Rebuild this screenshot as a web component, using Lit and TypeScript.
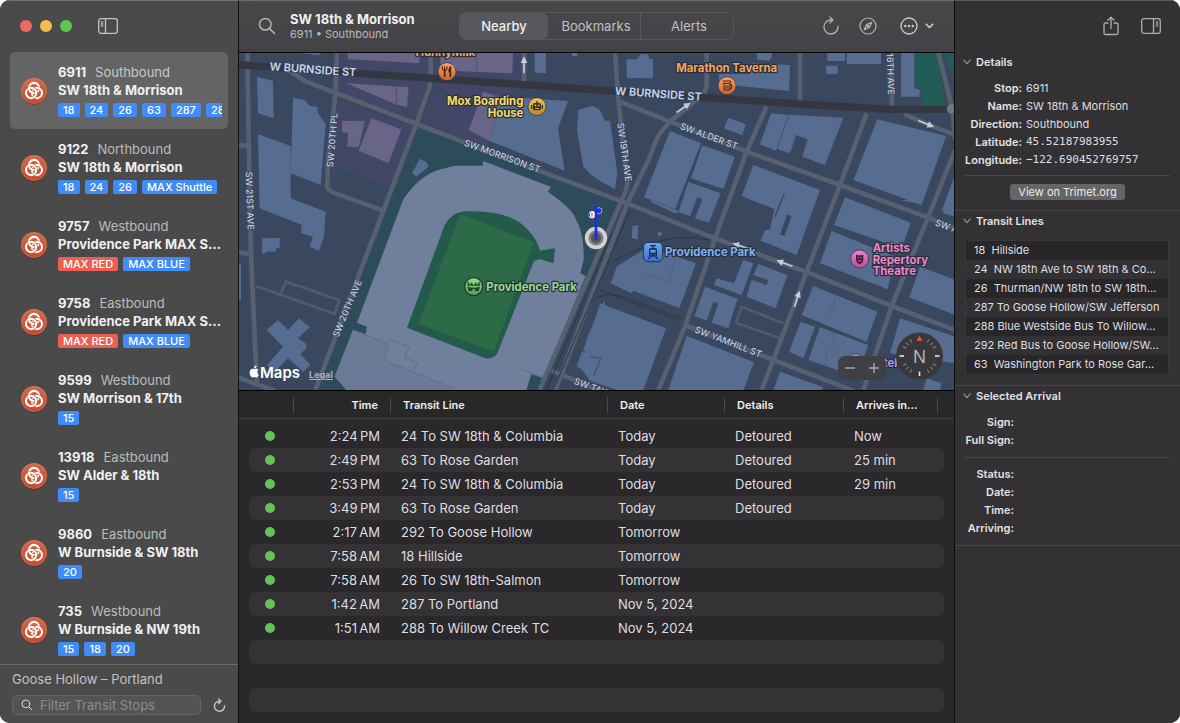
import { LitElement, html, svg, css } from "lit";
import { customElement, state } from "lit/decorators.js";
import { classMap } from "lit/directives/class-map.js";

interface Stop {
  id: string;
  dir: string;
  name: string;
  lines: string[];
}

interface Arrival {
  time: string;
  line: string;
  date: string;
  details?: string;
  arrives?: string;
}

const STOPS: Stop[] = [
  { id: "6911", dir: "Southbound", name: "SW 18th & Morrison", lines: ["18", "24", "26", "63", "287", "288"] },
  { id: "9122", dir: "Northbound", name: "SW 18th & Morrison", lines: ["18", "24", "26", "MAX Shuttle"] },
  { id: "9757", dir: "Westbound", name: "Providence Park MAX S…", lines: ["MAX RED", "MAX BLUE"] },
  { id: "9758", dir: "Eastbound", name: "Providence Park MAX S…", lines: ["MAX RED", "MAX BLUE"] },
  { id: "9599", dir: "Westbound", name: "SW Morrison & 17th", lines: ["15"] },
  { id: "13918", dir: "Eastbound", name: "SW Alder & 18th", lines: ["15"] },
  { id: "9860", dir: "Eastbound", name: "W Burnside & SW 18th", lines: ["20"] },
  { id: "735", dir: "Westbound", name: "W Burnside & NW 19th", lines: ["15", "18", "20"] },
];

const ARRIVALS: Arrival[] = [
  { time: "2:24\u2009PM", line: "24 To SW 18th & Columbia", date: "Today", details: "Detoured", arrives: "Now" },
  { time: "2:49\u2009PM", line: "63 To Rose Garden", date: "Today", details: "Detoured", arrives: "25 min" },
  { time: "2:53\u2009PM", line: "24 To SW 18th & Columbia", date: "Today", details: "Detoured", arrives: "29 min" },
  { time: "3:49\u2009PM", line: "63 To Rose Garden", date: "Today", details: "Detoured" },
  { time: "2:17\u2009AM", line: "292 To Goose Hollow", date: "Tomorrow" },
  { time: "7:58\u2009AM", line: "18 Hillside", date: "Tomorrow" },
  { time: "7:58\u2009AM", line: "26 To SW 18th-Salmon", date: "Tomorrow" },
  { time: "1:42\u2009AM", line: "287 To Portland", date: "Nov 5, 2024" },
  { time: "1:51\u2009AM", line: "288 To Willow Creek TC", date: "Nov 5, 2024" },
];

const TRANSIT_LINES = [
  "18  Hillside",
  "24  NW 18th Ave to SW 18th & Co…",
  "26  Thurman/NW 18th to SW 18th…",
  "287 To Goose Hollow/SW Jefferson",
  "288 Blue Westside Bus To Willow…",
  "292 Red Bus to Goose Hollow/SW…",
  "63  Washington Park to Rose Gar…",
];

const reloadIcon = html`<svg width="18" height="20" viewBox="0 0 18 20" fill="none" stroke="currentColor" stroke-width="1.3" stroke-linecap="round" stroke-linejoin="round" aria-hidden="true">
  <path d="M15.9 10.200A7 7 0 1 1 9 4h1.600M7.800 .9l3.100 3.100-3.100 3.100" />
</svg>`;

const searchIcon = html`<svg width="18" height="18" viewBox="0 0 18 18" fill="none" stroke="currentColor" stroke-width="1.5" stroke-linecap="round" aria-hidden="true">
  <circle cx="7.3" cy="7.3" r="5.8" /><path d="M11.6 11.6l4.9 4.9" />
</svg>`;

const chevron = html`<svg class="chev" width="8" height="6" viewBox="0 0 8 6" fill="none" stroke="currentColor" stroke-width="1.1" stroke-linecap="round" stroke-linejoin="round" aria-hidden="true">
  <path d="M.8 1L4 4.6 7.2 1" />
</svg>`;

@customElement("stop-badge")
class StopBadge extends LitElement {
  static styles = css`
    :host { display: block; width: 28px; height: 28px; }
    svg { display: block; }
  `;
  render() {
    return html`<svg width="28" height="28" viewBox="0 0 28 28" aria-hidden="true">
      <defs><linearGradient id="g" x1="0" y1="0" x2="0" y2="1"><stop offset="0" stop-color="#d4694b" /><stop offset="1" stop-color="#c44a2c" /></linearGradient></defs>
      <ellipse cx="14" cy="15" rx="12.6" ry="12.8" fill="#000" opacity=".28" />
      <circle cx="14" cy="14" r="13" fill="url(#g)" />
      <circle cx="14" cy="14" r="12.4" fill="none" stroke="#fff" stroke-opacity=".15" stroke-width=".8" />
      <g fill="none">
        <circle cx="14" cy="11" r="5.100" stroke="#fff" stroke-width="2.100" />
        <circle cx="16.900" cy="16" r="5.100" stroke="#cb5637" stroke-width="3.300" />
        <circle cx="16.900" cy="16" r="5.100" stroke="#fff" stroke-width="2.100" />
        <circle cx="11.100" cy="16" r="5.100" stroke="#cb5637" stroke-width="3.300" />
        <circle cx="11.100" cy="16" r="5.100" stroke="#fff" stroke-width="2.100" />
        <path d="M9 11.900A5.100 5.100 0 0 0 13 16" stroke="#cb5637" stroke-width="3.300" />
        <path d="M9 10A5.100 5.100 0 0 0 13.800 16.100" stroke="#fff" stroke-width="2.100" />
      </g>
    </svg>`;
  }
}

@customElement("transit-map")
class TransitMap extends LitElement {
  static styles = css`
    :host { display: block; position: relative; overflow: hidden; background: #39485e; font-family: Inter, "Liberation Sans", sans-serif; }
    .map { position: absolute; inset: 0; width: 100%; height: 100%; display: block; }
    .building { fill: #566c90; }
    .shade { fill: #686588; }
    .road { fill: none; stroke: #566070; stroke-width: 14; stroke-linejoin: round; }
    .lane { fill: none; stroke: #535a6c; stroke-width: 8; }
    .main { fill: none; stroke: #343740; stroke-width: 22; }
    .rail { fill: none; stroke: #2c3646; stroke-width: 3; }
    .street { fill: #c3cfe2; stroke: #36435a; stroke-width: 4; paint-order: stroke; font-size: 27px; font-weight: 500; text-anchor: middle; }
    .wide { font-size: 33px; font-weight: 600; fill: #c8d5ef; }
    .open { text-anchor: start; }
    .poi { stroke: #2a2d3a; stroke-width: 7; stroke-linejoin: round; paint-order: stroke; font-size: 34px; font-weight: 700; }
    .end { text-anchor: end; }
    .mid { text-anchor: middle; }
    .arrow { fill: none; stroke: #c6cddb; stroke-width: 5; }
    .brand { position: absolute; left: 10px; bottom: 6px; display: flex; align-items: baseline; color: #fff; }
    .brand svg { width: 10px; height: 13px; margin-right: 1px; }
    .maps { font-size: 15px; line-height: 18px; font-weight: 600; }
    .legal { margin-left: 9px; font-size: 9px; font-weight: 700; color: #a9b0bd; text-decoration: underline; }
    .zoom { position: absolute; right: 68px; bottom: 10px; display: flex; width: 48px; height: 24px; border-radius: 7px; background: #413f46; }
    .zoom button { flex: 1; border: 0; padding: 0; background: none; color: #aaa9ad; display: grid; place-items: center; }
    .compass { position: absolute; right: 11px; bottom: 10px; width: 47px; height: 48px; border: 0; padding: 0; background: none; }
    .compass svg { display: block; }
    .north { fill: #b5b4b7; font-size: 18px; font-weight: 500; text-anchor: middle; }
  `;

  private poly(cls: string, shapes: string[]) {
    return shapes.map((p) => svg`<polygon class=${cls} points=${p} />`);
  }

  private paths(cls: string, shapes: string[]) {
    return shapes.map((d) => svg`<path class=${cls} d=${d} />`);
  }

  private arrow(x: number, y: number, angle: number) {
    return svg`<g transform="translate(${x} ${y}) rotate(${angle})"><path class="arrow" d="M-25 0H14" /><path d="M6 -10L26 0L6 10Z" fill="#c6cddb" /></g>`;
  }

  private street(x: number, y: number, angle: number, label: string, extra = "") {
    return svg`<text class="street ${extra}" transform="translate(${x} ${y}) rotate(${angle})" dy="10">${label}</text>`;
  }

  render() {
    const ticks = Array.from({ length: 24 }, (_, i) => i).filter((i) => (i % 6 !== 0 && i % 2 === 0) || i % 6 === 3);
    return html`
      <svg class="map" viewBox="717 159 2145 1011" preserveAspectRatio="xMidYMid slice" role="img" aria-label="Map of stops near Providence Park">
        <defs>
          <linearGradient id="orange" x1="0" y1="0" x2="0" y2="1"><stop offset="0" stop-color="#f7a765" /><stop offset="1" stop-color="#c8622f" /></linearGradient>
          <linearGradient id="gold" x1="0" y1="0" x2="0" y2="1"><stop offset="0" stop-color="#ecc766" /><stop offset="1" stop-color="#b2872f" /></linearGradient>
          <linearGradient id="green" x1="0" y1="0" x2="0" y2="1"><stop offset="0" stop-color="#93e08a" /><stop offset="1" stop-color="#4f9c4e" /></linearGradient>
          <linearGradient id="blue" x1="0" y1="0" x2="0" y2="1"><stop offset="0" stop-color="#6ba6f3" /><stop offset="1" stop-color="#3b6fc9" /></linearGradient>
          <linearGradient id="pink" x1="0" y1="0" x2="0" y2="1"><stop offset="0" stop-color="#f084cd" /><stop offset="1" stop-color="#b74c98" /></linearGradient>
        </defs>

        <g fill="#424767">
          <polygon points="1019,159 1564,159 1564,240 1019,222" />
          <polygon points="1014,230 1284,240 1264,330 1244,370 1014,285" />
          <polygon points="1009,300 1244,380 1144,625 994,560" />
          <polygon points="1314,245 1544,262 1454,455 1259,370" />
        </g>
        <polygon points="1009,500 1170,560 1140,620 1000,565" fill="#39485e" />
        <polygon points="1259,385 1850,600 1640,1170 954,1170" fill="#2c4c5b" />

        <g transform="translate(1770 0)">
          <polygon points="975,158 1040,158 1065,318 998,318 993,268 975,262" fill="#225c56" />
          <polygon points="1062,158 1095,158 1095,245" fill="#225c56" />
        </g>

        <g transform="translate(714 0)">
          ${this.poly("building", [
            "57,230 105,243 107,355 60,340",
            "165,293 200,300 215,318 238,320 240,340 263,372 248,555 158,520",
            "60,402 158,438 158,595 263,635 258,710 243,752 215,740 225,710 188,698 192,675 65,625",
            "190,158 245,158 245,166 190,160",
            "890,158 924,158 924,220 890,218",
            "1000,158 1018,158 1018,168 1002,168",
            "800,290 990,303 960,385 980,512 752,422 775,360",
            "1021,330 1050,320 1066,318 1086,330 1101,362 1116,362 1138,520 1131,567 1090,545 1060,525 1036,500 1017,390",
            "545,477 565,485 572,500 535,530 522,520",
          ])}
          ${this.poly("shade", [
            "328,158 545,158 543,190 330,178",
            "607,165 740,158 825,158 823,220 640,212 607,205",
            "325,250 512,262 507,322 470,312",
            "312,362 380,364 372,400 362,440 328,440 330,400 312,395",
            "400,355 490,388 452,490 362,452",
            "735,275 800,295 775,360 752,422 692,390",
          ])}
          <path d="M475 262V312M716 158V215" stroke="#424767" stroke-width="2" />
        </g>

        <g transform="translate(1770 0)">
          ${this.poly("building", [
            "110,178 140,178 150,163 175,163 178,176 189,178 189,235 110,234",
            "500,158 545,158 545,172 538,182 502,180",
            "385,222 480,222 480,190 600,195 597,273 485,262 390,252",
            "712,158 765,158 765,183 712,183",
            "770,158 873,158 873,192 770,192",
            "708,197 743,197 743,222 708,222",
            "933,158 973,158 973,265 990,270 988,290 933,290",
            "415,353 467,373 457,405 402,385",
            "240,393 333,430 255,628 162,592",
            "337,436 435,470 400,567 303,535",
            "295,546 392,580 357,668 315,655 338,598 322,592 300,648 265,637",
            "182,600 270,635 255,640 182,605",
            "543,340 595,345 558,452 510,433",
            "597,344 760,353 705,495 637,470 653,418 618,405 600,460 562,447",
            "490,495 690,570 620,765 512,722 525,690 540,690 553,627 455,588",
            "862,358 1068,408 995,615 790,540",
            "765,592 962,668 935,745 732,675",
            "725,693 915,770 893,868 690,790",
            "1082,560 1095,520 1095,650 1055,632",
            "930,600 998,600 990,612",
          ])}
          <path d="M583 580L555 650" stroke="#39485e" stroke-width="4" />
          <path d="M598 645L577 706" stroke="#39485e" stroke-width="14" />
        </g>

        <g transform="translate(714 600)">
          ${this.poly("building", [
            "72,115 125,114 125,145 113,145 113,155 85,155 85,160 72,160",
            "0,190 9,190 9,300 0,300",
            "120,360 150,390 183,355 215,382 180,415 205,432 205,445 187,462 217,495 195,515 150,475 105,520 88,495 135,440 86,390",
            "1015,500 1032,455 1080,475 1080,530",
            "1035,455 1048,410 1100,300 1100,430",
          ])}
          <path d="M495 0Q540 -70 600 -90L650 -103H735V-117L938 -40L930 -25Q1000 25 1010 50Q1040 100 1037 180L1027 220L1043 228L917 535L880 523L865 570H325L312 552L290 530L345 390L383 402L387 380L357 368Z" fill="#6f7f9c" />
          <path d="M290 530L345 390L453 432L437 480L650 570H325Z" fill="#6a7a97" />
          <path d="M345 390L453 432L437 480L560 530L650 565M453 418L513 440L500 472L537 487L530 512M850 508L915 533" fill="none" stroke="#57667f" stroke-width="2" />
          <path d="M507 383L620 75Q640 38 680 34Q820 28 872 92Q900 122 905 152L951 145L947 190L905 177L888 183L778 460Q765 480 740 474Z" fill="#235a4c" />
          <polygon points="667,43 888,127 767,455 541,372" fill="#2c6b46" />
        </g>

        <g transform="translate(1770 600)">
          ${this.poly("building", [
            "80,200 175,140 318,190 268,325 225,308 130,272 125,280 62,250",
            "460,180 490,190 455,285 372,255 380,235 432,250",
            "505,192 592,225 557,325 470,290 485,240 530,255 535,240 490,225",
            "345,260 443,297 415,385 365,368 385,310 370,305 350,362 313,348",
            "30,310 228,385 160,570 80,570 0,542 -30,500",
            "290,407 492,487 460,570 235,570",
            "670,258 862,335 830,425 635,345",
            "632,365 675,380 640,475 597,455",
            "690,382 835,435 800,530 770,520 655,480",
            "990,200 1095,240 1095,345 958,292",
            "930,355 1095,410 1095,490 900,460",
            "570,515 700,562 695,570 550,570",
            "1010,535 1055,550 1050,570 1000,570",
            "127,78 145,75 143,118 125,115",
            "209,94 217,102 209,110 201,102",
            "1065,20 1095,0 1095,50 1060,40",
          ])}
          <path d="M720 400L735 402L728 440L712 445L705 500M738 290L715 355M165 218L235 245L255 180" fill="none" stroke="#485a78" stroke-width="2" />
          <path d="M0 470L32 475L12 525" fill="none" stroke="#39485e" stroke-width="3" />
          ${this.paths("rail", [
            "M0 310Q40 270 100 290L275 355",
            "M55 190Q110 160 190 130T360 120",
            "M30 270L270 362",
          ])}
          ${this.paths("lane", ["M580 370L455 320L438 368L570 415"])}
        </g>

        <g>
          ${this.paths("lane", [
            "M768 858L1004 942L1018 900L858 845L842 880",
          ])}
          ${this.paths("road", [
            "M742 158L749 600L754 790L771 1160",
            "M714 758L754 762",
            "M714 1132L824 1172",
            "M714 436H745",
            "M1011 158L1006 285L984 480L982 560Q984 570 999 577L1149 632",
            "M864 210L919 245L1249 372L1624 515L1875 608L2145 715L2430 820L2675 918L2865 990",
            "M1292 158V240L1286 270L1249 372L946 1170",
            "M1572 158V245",
            "M1845 158L1855 300L1882 540Q1884 560 1872 585L1619 1170",
            "M2120 158V255Q2118 280 2095 295L2010 365Q1970 400 1950 470L1880 615L1665 1172",
            "M1860 305L2010 365L2240 455L2520 555L2790 655L2865 685",
            "M2300 318L2240 455L2145 715L2055 980L1975 1170",
            "M2600 340L2520 555L2420 815L2320 1080L2285 1170",
            "M2865 450L2785 650L2675 918L2590 1170",
            "M2400 158V305",
            "M2675 158V320",
            "M2815 158L2858 330L2865 420",
            "M2712 342Q2760 365 2865 405",
            "M2055 975L2320 1080L2560 1172",
            "M1654 1112L1760 1155L1800 1172",
          ])}
          <path class="main" d="M714 194L1074 220L1284 234L1794 270L2110 292L2450 315L2670 328H2865" />
          <circle cx="2854" cy="327" r="14" fill="#707886" />
          <path class="rail" d="M1890 630L1660 1170M1835 700L1640 1170" />
        </g>

        ${this.arrow(1572, 195, -90)}
        ${this.arrow(2050, 323, -35)}
        ${this.arrow(2778, 371, 22)}
        ${this.arrow(2222, 738, 198)}
        ${this.arrow(2354, 790, 200)}
        ${this.arrow(2391, 897, -72)}

        ${this.street(939, 210, 4, "W BURNSIDE ST", "wide")}
        ${this.street(1975, 283, 4, "W BURNSIDE ST", "wide")}
        ${this.street(1507, 468, 20, "SW MORRISON ST")}
        ${this.street(996, 420, -85, "SW 20TH PL")}
        ${this.street(750, 602, 88, "SW 21ST AVE")}
        ${this.street(1041, 925, -67, "SW 20TH AVE")}
        ${this.street(1874, 456, 82, "SW 19TH AVE")}
        ${this.street(2127, 408, 20, "SW ALDER ST")}
        ${this.street(2672, 222, 88, "16TH AVE")}
        ${this.street(2185, 1025, 21, "SW YAMHILL ST")}
        ${this.street(2807, 666, 20, "SW ALDER ST", "open")}
        ${this.street(1724, 1142, 20, "SW TAYLOR ST", "open")}

        <text class="poi mid" x="1336" y="168" fill="#f3a35e">HunnyMilk</text>
        <circle cx="1341" cy="215" r="27" fill="url(#orange)" stroke="#2a2d3a" stroke-width="2" />
        <g fill="none" stroke="#41251b"><path d="M1334 208V231" stroke-width="5" /><path d="M1327 199V207Q1327 211 1334 211Q1341 211 1341 207V199M1334 199V210" stroke-width="3" /><path d="M1351 199V231" stroke-width="5" /></g>
        <path d="M1351 199Q1345 204 1345 217H1351Z" fill="#41251b" />

        <text class="poi end" x="1570" y="316" fill="#f1dc70">Mox Boarding</text>
        <text class="poi end" x="1570" y="352" fill="#f1dc70">House</text>
        <circle cx="1611" cy="320" r="27" fill="url(#gold)" stroke="#2a2d3a" stroke-width="2" />
        <g fill="#3b2f18"><rect x="1599" y="309" width="24" height="22" rx="5" /><rect x="1593" y="315" width="4" height="11" /><rect x="1625" y="315" width="4" height="11" /><rect x="1609" y="303" width="4" height="6" /></g>
        <g fill="#d9b355"><rect x="1603" y="314" width="6" height="5" /><rect x="1613" y="314" width="6" height="5" /><rect x="1605" y="324" width="12" height="3" /></g>

        <text class="poi mid" x="2180" y="216" fill="#f3a35e">Marathon Taverna</text>
        <circle cx="2181" cy="257" r="27" fill="url(#orange)" stroke="#2a2d3a" stroke-width="2" />
        <path d="M2169 250H2190V270H2172V250M2168 243H2192V250M2190 254H2195V265H2190M2178 256V266M2184 256V266" fill="none" stroke="#41251b" stroke-width="3" />

        <circle cx="1421" cy="860" r="27" fill="url(#green)" stroke="#263a30" stroke-width="4" />
        <g fill="none" stroke="#1f4629" stroke-width="4"><path d="M1405 846V853Q1421 858 1437 853V846M1405 853V858M1437 853V858M1415 848V856M1427 848V856" /></g>
        <path d="M1402 860Q1421 866 1440 860L1436 873H1425V868H1417V873H1406Z" fill="#1f4629" />
        <text class="poi" x="1459" y="872" fill="#92de8c">Providence Park</text>

        <rect x="1930" y="727" width="58" height="58" rx="14" fill="url(#blue)" stroke="#24304a" stroke-width="3" />
        <g fill="none" stroke="#1c2d52" stroke-width="4"><path d="M1959 745V737M1950 737H1968M1951 770L1945 777M1967 770L1973 777" /></g>
        <rect x="1947" y="744" width="24" height="26" rx="5" fill="#1c2d52" />
        <rect x="1951" y="749" width="16" height="9" rx="2" fill="#5c94e6" />
        <path d="M1951 764h4M1963 764h4" stroke="#5c94e6" stroke-width="3" />
        <text class="poi" x="1995" y="769" fill="#7db3f6">Providence Park</text>

        <circle cx="2579" cy="777" r="27" fill="url(#pink)" stroke="#2a2d3a" stroke-width="2" />
        <path d="M2568 764Q2579 768 2590 764V779Q2588 790 2579 793Q2570 790 2568 779Z" fill="#4a1b3e" />
        <path d="M2573 773h4M2581 773h4M2574 781Q2579 787 2584 781" fill="none" stroke="#dd74bb" stroke-width="3" />
        <text class="poi" x="2618" y="755" fill="#ee86cc">Artists</text>
        <text class="poi" x="2618" y="791" fill="#ee86cc">Repertory</text>
        <text class="poi" x="2618" y="826" fill="#ee86cc">Theatre</text>

        <circle cx="2567" cy="1086" r="25" fill="#9a7fe0" stroke="#2a2d3a" stroke-width="2" />
        <text class="poi end" x="2692" y="1102" fill="#b394f0">Hotel</text>

        <circle cx="1788" cy="714" r="28" fill="#7d7d80" stroke="#d2d2d3" stroke-width="11" />
        <circle cx="1788" cy="714" r="15" fill="#55565c" />
        <ellipse cx="1776" cy="644" rx="10" ry="11" fill="#fff" />
        <path d="M1772 637A8 8 0 0 0 1772 651" fill="none" stroke="#1a2bf0" stroke-width="3" />
        <path d="M1776 638V650" stroke="#d33" stroke-width="3" />
        <circle cx="1797" cy="632" r="9" fill="#1a2bf0" stroke="#dfe4ff" stroke-width="2" />
        <path d="M1788 720V618" stroke="#1a2bf0" stroke-width="8" />
      </svg>

      <div class="brand">
        <svg viewBox="0 0 10 13" aria-hidden="true"><path d="M8.3 6.8c0-1.300 1-1.900 1.100-2-.6-.9-1.500-1-1.900-1-.8-.1-1.600.5-2 .5s-1.100-.5-1.700-.5C2.400 3.900.6 4.800.6 7.500c0 2.400 1.700 5 3 5 .7 0 1-.5 1.900-.5s1.100.5 1.900.5c1.200 0 2.100-2.100 2.300-2.800-.1 0-1.400-.6-1.400-2.900zM6.900 2.600C7.300 2.100 7.600 1.300 7.500.5c-.7 0-1.500.5-1.900 1-.4.4-.7 1.200-.6 1.900.7.1 1.500-.3 1.900-.8z" fill="#fff" /></svg>
        <span class="maps">Maps</span>
        <a class="legal" href="#legal">Legal</a>
      </div>

      <div class="zoom">
        <button aria-label="Zoom out"><svg width="12" height="12" viewBox="0 0 12 12"><path d="M1 6H11" stroke="currentColor" stroke-width="1.4" /></svg></button>
        <button aria-label="Zoom in"><svg width="12" height="12" viewBox="0 0 12 12"><path d="M1 6H11M6 1V11" stroke="currentColor" stroke-width="1.4" /></svg></button>
      </div>
      <button class="compass" aria-label="Compass, north up">
        <svg width="47" height="48" viewBox="0 0 47 48">
          <circle cx="23.5" cy="24" r="23.500" fill="#38383c" />
          ${ticks.map((i) => svg`<path d="M23.500 5V8.500" stroke="#8d8d90" stroke-width="1" transform="rotate(${i * 15} 23.500 24)" />`)}
          ${[90, 180, 270].map((a) => svg`<path d="M23.500 4V8.500" stroke="#e8e8e8" stroke-width="1.600" transform="rotate(${a} 23.500 24)" />`)}
          <path d="M23.500 3.500L26.500 9H20.500Z" fill="#e5503f" />
          <text class="north" x="23.500" y="30.500">N</text>
        </svg>
      </button>
    `;
  }
}

@customElement("app-root")
class AppRoot extends LitElement {
  @state() private selected = 0;
  @state() private tab = "Nearby";

  static styles = css`
    :host { display: block; font-family: Inter, "Liberation Sans", sans-serif; font-size: 13px; line-height: 18px; color: #dfdfe0; background: #fff; }
    * { box-sizing: border-box; }
    button { font: inherit; color: inherit; border: 0; padding: 0; background: none; }
    svg { display: block; }
    .window { display: grid; grid-template-columns: 239px minmax(0, 1fr) 226px; height: 100vh; border-radius: 10px; overflow: hidden; background: #000; }

    .sidebar { display: flex; flex-direction: column; min-height: 0; background: #4a4a4a; border-right: 1px solid #111; border-top: 1px solid #717171; }
    .chrome { display: flex; align-items: center; height: 51px; padding: 0 0 2px 20px; gap: 8px; flex: none; }
    .light { width: 12px; height: 12px; border-radius: 50%; }
    .close { background: #ec6a5e; }
    .minimize { background: #f4be4f; }
    .expand { background: #61c554; }
    .pane { margin-left: 18px; color: #c4c4c4; }
    .stops { flex: 1; min-height: 0; overflow: hidden; list-style: none; margin: 0; padding: 0 10px; }
    .stop { display: grid; grid-template-columns: 28px minmax(0, 1fr); gap: 10px; align-items: center; width: 100%; height: 77px; padding: 0 6px 0 10px; border-radius: 5px; text-align: left; }
    .picked { background: #646464; }
    .info { display: flex; flex-direction: column; overflow: hidden; padding-bottom: 2px; }
    .heading { white-space: nowrap; color: #bcbcbc; }
    .picked .heading { color: #cacaca; }
    .heading strong { color: #f2f2f2; font-weight: 700; margin-right: 9px; }
    .place { white-space: nowrap; font-size: 13px; font-weight: 700; color: #f0f0f0; }
    .tags { display: flex; gap: 5px; margin-top: 4px; }
    .tag { flex: none; padding: 0 5px; border-radius: 2px; background: #3f8bf7; color: #fff; font-size: 11px; font-weight: 500; line-height: 14px; }
    .red { background: #ec5f52; }
    .footer { flex: none; padding: 5px 12px 8px; border-top: 1px solid #6a6a6a; color: #c2c2c2; }
    .filter { display: flex; align-items: center; gap: 12px; margin-top: 7px; }
    .box { display: flex; align-items: center; gap: 7px; flex: 1; min-width: 0; height: 20px; padding: 0 8px; border: 1px solid #656565; border-radius: 5px; background: #545454; color: #dcdcdc; }
    .box svg { width: 12px; height: 12px; flex: none; }
    .field { flex: 1; width: 0; min-width: 0; border: 0; padding: 0; background: none; font: inherit; line-height: 16px; color: #eee; outline: 0; }
    .field::placeholder { color: #8d8d8d; opacity: 1; }
    .filter button svg { width: 13px; height: 15px; stroke-width: 2; }

    .content { display: flex; flex-direction: column; min-width: 0; min-height: 0; border-top: 1px solid #6c6b6f; background: #2a282b; }
    .toolbar { display: flex; align-items: center; flex: none; height: 52px; padding: 0 20px 2px 19px; background: linear-gradient(#48474a, #434347); border-bottom: 1px solid #050505; color: #b4b4b6; }
    .title { width: 169px; margin-left: 14px; }
    .title h1 { margin: 0; font-size: 13px; line-height: 16px; font-weight: 700; color: #f0f0f0; white-space: nowrap; }
    .title p { margin: 0; font-size: 11px; line-height: 14px; color: #b9b9bb; }
    .tabs { display: flex; width: 275px; height: 28px; border: 1px solid #57565a; border-radius: 7px; }
    .tab { flex: 1; color: #c0c0c2; }
    .tab + .tab { padding-left: 4px; }
    .tab + .tab + .tab { border-left: 1px solid #57565a; }
    .active { background: #58575b; border-radius: 6px; color: #ededed; font-weight: 500; }
    .tools { display: flex; align-items: center; margin-left: auto; gap: 19px; }
    .more { display: flex; align-items: center; gap: 7px; margin-left: 4px; color: #cfcfd1; }
    transit-map { flex: 1; min-height: 0; }

    .arrivals { flex: none; padding: 0 10px 11px; border-top: 1px solid #000; background: linear-gradient(#282828 27px, #434144 27px, #434144 28px, #2a282b 28px); }
    table { width: 100%; table-layout: fixed; border-collapse: separate; border-spacing: 0; }
    th { height: 28px; padding: 0 0 0 12px; font-size: 11px; font-weight: 600; line-height: 14px; text-align: left; color: #efefef; background: linear-gradient(#4a494b, #4a494b) right 6px / 1px 16px no-repeat; }
    th:last-child { background: none; }
    th.time { padding: 0 13px 0 0; }
    .time { text-align: right; }
    tbody::before { content: ""; display: block; height: 5px; }
    td { height: 24px; padding: 0 0 0 10px; line-height: 18px; white-space: nowrap; }
    td.time { padding: 0 11px 0 0; }
    tbody tr:nth-child(even) td { background: #343235; }
    tbody tr td:first-child { border-radius: 5px 0 0 5px; }
    tbody tr td:last-child { border-radius: 0 5px 5px 0; padding: 0; }
    .c-dot { width: 45px; }
    .c-time { width: 97px; }
    .c-date { width: 117px; }
    .c-details { width: 119px; }
    .c-arrives { width: 94px; }
    .c-end { width: 6px; }
    .dot { display: block; width: 10px; height: 10px; margin-left: 6px; border-radius: 50%; background: #5fc553; }

    .inspector { border-left: 1px solid #0c0c0c; border-top: 1px solid #5c5b5e; background: #333134; font-size: 11px; line-height: 18px; }
    .actions { display: flex; align-items: center; justify-content: flex-end; gap: 22px; height: 51px; padding: 0 19px 2px 0; color: #aeaeb0; }
    details { border-bottom: 1px solid #464447; padding-bottom: 10px; }
    details:last-child { padding-bottom: 8px; }
    summary { display: flex; align-items: center; gap: 5px; list-style: none; height: 20px; padding-left: 8px; font-weight: 600; color: #e2e2e3; }
    .chev { color: #9c9b9e; }
    dl { display: grid; grid-template-columns: 57px 1fr; column-gap: 4px; margin: 7px 10px 6px 10px; }
    dt { text-align: right; font-weight: 600; white-space: nowrap; color: #e2e2e3; }
    dd { margin: 0; min-height: 18px; white-space: nowrap; }
    .narrow { grid-template-columns: 49px 1fr; margin-bottom: 8px; }
    .last { margin: 7px 10px 0; }
    .mono { font-family: "DejaVu Sans Mono", "Liberation Mono", monospace; }
    .rule { height: 1px; margin: 0 10px; border: 0; background: #4a484b; }
    .link { display: block; margin: 8px auto 0; height: 16px; padding: 0 8px; line-height: 16px; border-radius: 3px; background: #656466; color: #ececec; text-decoration: none; width: max-content; }
    .lines { list-style: none; margin: 9px 11px 0 10px; padding: 0; border: 1px solid #39373a; }
    .lines li { height: 19px; padding-left: 8px; line-height: 19px; white-space: pre; overflow: hidden; }
    .lines li:nth-child(odd) { background: #282629; }
  `;

  render() {
    const current = STOPS[this.selected];
    return html`
      <div class="window">
        <nav class="sidebar" aria-label="Transit stops">
          <div class="chrome">
            <button class="light close" aria-label="Close"></button>
            <button class="light minimize" aria-label="Minimize"></button>
            <button class="light expand" aria-label="Zoom window"></button>
            <button class="pane" aria-label="Toggle sidebar">
              <svg width="20" height="16" viewBox="0 0 20 16" fill="none" stroke="currentColor" stroke-width="1.300"><rect x=".7" y=".7" width="18.600" height="14.600" rx="2.200" /><path d="M7.500 1V15M2.800 3.800H5.200M2.800 6H5.200M2.800 8.200H5.200" /></svg>
            </button>
          </div>
          <ul class="stops">
            ${STOPS.map(
              (s, i) => html`<li>
                <button class=${classMap({ stop: true, picked: i === this.selected })} @click=${() => (this.selected = i)}>
                  <stop-badge></stop-badge>
                  <span class="info">
                    <span class="heading"><strong>${s.id}</strong>${s.dir}</span>
                    <span class="place">${s.name}</span>
                    <span class="tags">${s.lines.map((l) => html`<span class=${classMap({ tag: true, red: l === "MAX RED" })}>${l}</span>`)}</span>
                  </span>
                </button>
              </li>`
            )}
          </ul>
          <div class="footer">
            <div>Goose Hollow – Portland</div>
            <div class="filter">
              <label class="box">${searchIcon}<input class="field" type="text" placeholder="Filter Transit Stops" aria-label="Filter Transit Stops" /></label>
              <button aria-label="Reload stops">${reloadIcon}</button>
            </div>
          </div>
        </nav>

        <main class="content">
          <header class="toolbar">
            <button aria-label="Search">${searchIcon}</button>
            <div class="title">
              <h1>${current.name}</h1>
              <p>${current.id} • ${current.dir}</p>
            </div>
            <div class="tabs">
              ${["Nearby", "Bookmarks", "Alerts"].map(
                (t) => html`<button class=${classMap({ tab: true, active: t === this.tab })} @click=${() => (this.tab = t)}>${t}</button>`
              )}
            </div>
            <div class="tools">
              <button aria-label="Reload">${reloadIcon}</button>
              <button aria-label="Locate">
                <svg width="18" height="18" viewBox="0 0 18 18" fill="none" stroke="currentColor" stroke-width="1.200"><circle cx="9" cy="9" r="8" /><path d="M12.800 5.200L10.400 10.400L5.200 12.800L7.600 7.600Z" stroke-linejoin="round" /><circle cx="9" cy="9" r="1" /></svg>
              </button>
              <button class="more" aria-label="More actions">
                <svg width="18" height="18" viewBox="0 0 18 18" fill="none" stroke="currentColor" stroke-width="1.300"><circle cx="9" cy="9" r="8" /><g fill="currentColor" stroke="none"><circle cx="5.300" cy="9" r="1.200" /><circle cx="9" cy="9" r="1.200" /><circle cx="12.700" cy="9" r="1.200" /></g></svg>
                <svg width="9" height="6" viewBox="0 0 9 6" fill="none" stroke="currentColor" stroke-width="1.600" stroke-linecap="round" stroke-linejoin="round"><path d="M1.200 1.200L4.500 4.500L7.800 1.200" /></svg>
              </button>
            </div>
          </header>

          <transit-map></transit-map>

          <section class="arrivals" aria-label="Arrivals">
            <table>
              <colgroup>
                <col class="c-dot" /><col class="c-time" /><col /><col class="c-date" /><col class="c-details" /><col class="c-arrives" /><col class="c-end" />
              </colgroup>
              <thead>
                <tr><th></th><th class="time">Time</th><th>Transit Line</th><th>Date</th><th>Details</th><th>Arrives in…</th><th></th></tr>
              </thead>
              <tbody>
                ${ARRIVALS.map(
                  (a) => html`<tr>
                    <td><span class="dot"></span></td>
                    <td class="time">${a.time}</td>
                    <td>${a.line}</td>
                    <td>${a.date}</td>
                    <td>${a.details ?? ""}</td>
                    <td>${a.arrives ?? ""}</td>
                    <td></td>
                  </tr>`
                )}
                ${[0, 1, 2].map(() => html`<tr><td></td><td></td><td></td><td></td><td></td><td></td><td></td></tr>`)}
              </tbody>
            </table>
          </section>
        </main>

        <aside class="inspector" aria-label="Inspector">
          <div class="actions">
            <button aria-label="Share">
              <svg width="16" height="20" viewBox="0 0 16 20" fill="none" stroke="currentColor" stroke-width="1.300" stroke-linecap="round" stroke-linejoin="round"><path d="M5 7H2.500Q1 7 1 8.500V17Q1 18.500 2.500 18.500H13.500Q15 18.500 15 17V8.500Q15 7 13.500 7H11M8 12.500V1.500M5 4.300L8 1.300L11 4.300" /></svg>
            </button>
            <button aria-label="Toggle inspector">
              <svg width="20" height="16" viewBox="0 0 20 16" fill="none" stroke="currentColor" stroke-width="1.300"><rect x=".7" y=".7" width="18.600" height="14.600" rx="2.200" /><path d="M12.500 1V15M14.800 3.800H17.200M14.800 6H17.200M14.800 8.200H17.200" /></svg>
            </button>
          </div>

          <details open>
            <summary>${chevron}Details</summary>
            <dl>
              <dt>Stop:</dt><dd>${current.id}</dd>
              <dt>Name:</dt><dd>${current.name}</dd>
              <dt>Direction:</dt><dd>${current.dir}</dd>
              <dt>Latitude:</dt><dd class="mono">45.52187983955</dd>
              <dt>Longitude:</dt><dd class="mono">−122.690452769757</dd>
            </dl>
            <hr class="rule" />
            <a class="link" href="#trimet">View on Trimet.org</a>
          </details>

          <details open>
            <summary>${chevron}Transit Lines</summary>
            <ul class="lines">${TRANSIT_LINES.map((l) => html`<li>${l}</li>`)}</ul>
          </details>

          <details open>
            <summary>${chevron}Selected Arrival</summary>
            <dl class="narrow">
              <dt>Sign:</dt><dd></dd>
              <dt>Full Sign:</dt><dd></dd>
            </dl>
            <hr class="rule" />
            <dl class="narrow last">
              <dt>Status:</dt><dd></dd>
              <dt>Date:</dt><dd></dd>
              <dt>Time:</dt><dd></dd>
              <dt>Arriving:</dt><dd></dd>
            </dl>
          </details>
        </aside>
      </div>
    `;
  }
}
